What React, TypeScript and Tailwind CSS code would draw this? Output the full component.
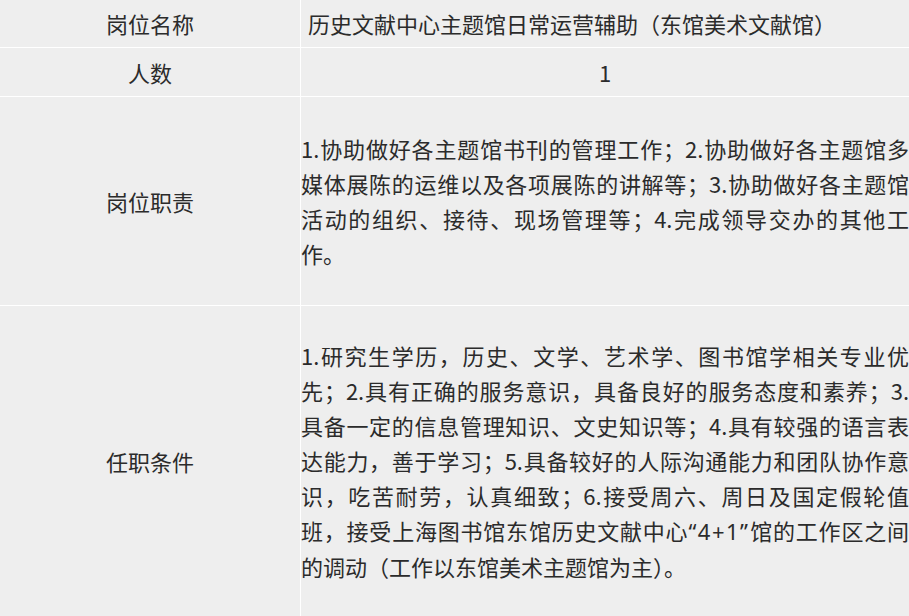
import React from "react";

const font = { fontFamily: '"Microsoft YaHei", "Noto Sans CJK SC", "Noto Sans", sans-serif' };

export default function App() {
  return (
    <div
      className="w-[909px] h-[616px] overflow-hidden bg-white text-[22px] leading-[35px] text-[#2b2b2b]"
      style={font}
    >
      <div className="grid grid-cols-[300px_608px] gap-px bg-white">
        <div className="h-[47px] bg-[#eeeeee] flex items-center justify-center">岗位名称</div>
        <div className="h-[47px] bg-[#eeeeee] flex items-center pl-[7px]">历史文献中心主题馆日常运营辅助（东馆美术文献馆）</div>

        <div className="h-[48px] bg-[#eeeeee] flex items-center justify-center">人数</div>
        <div className="h-[48px] bg-[#eeeeee] flex items-center justify-center">1</div>

        <div className="h-[208px] bg-[#eeeeee] flex items-center">
          <div className="w-full text-center">岗位职责</div>
        </div>
        <div className="h-[208px] bg-[#eeeeee] flex items-center">
          <p className="text-justify">
            1.协助做好各主题馆书刊的管理工作；2.协助做好各主题馆多媒体展陈的运维以及各项展陈的讲解等；3.协助做好各主题馆活动的组织、接待、现场管理等；4.完成领导交办的其他工作。
          </p>
        </div>

        <div className="h-[310px] bg-[#eeeeee] flex items-center">
          <div className="w-full text-center">任职条件</div>
        </div>
        <div className="h-[310px] bg-[#eeeeee] flex items-center">
          <p className="text-justify">
            {"1.研究生学历，历史、文学、艺术学、图书馆学相关专业优先；2.具有正确的服务意识，具备良好的服务态度和素养；3.具备一定的信息管理知识、文史知识等；4.具有较强的语言表达能力，善于学习；5.具备较好的人际沟通能力和团队协作意识，吃苦耐劳，认真细致；6.接受周六、周日及国定假轮值班，接受上海图书馆东馆历史文献中心"}
            <span className="font-['Noto_Sans',sans-serif] tracking-[1.5px]">{"“4+1”"}</span>
            {"馆的工作区之间的调动（工作以东馆美术主题馆为主）。"}
          </p>
        </div>
      </div>
    </div>
  );
}
